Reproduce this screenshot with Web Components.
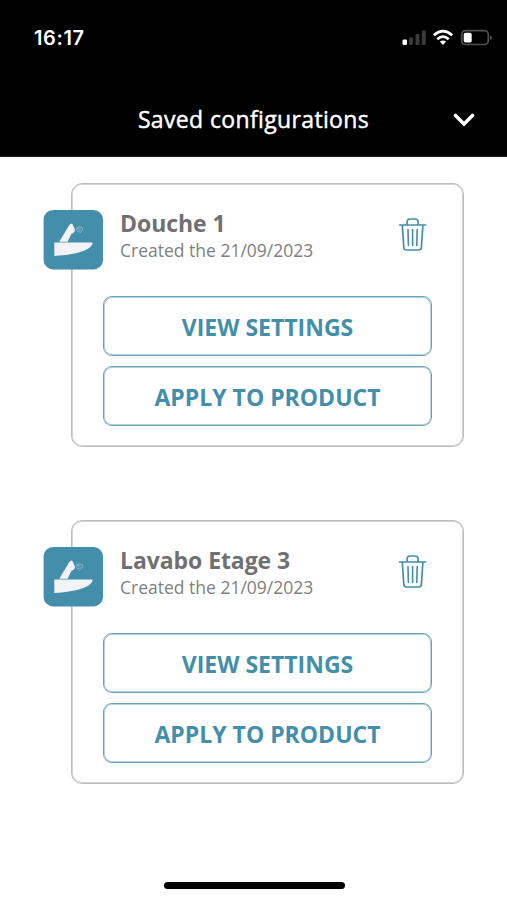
<!DOCTYPE html>
<html lang="en">
<head>
<meta charset="utf-8">
<title>Saved configurations</title>
<style>
html, body { margin: 0; background: #fff; }
body { width: 507px; height: 900px; overflow: hidden; font-family: "Open Sans", sans-serif; }
</style>
</head>
<body>
<app-screen>
  <status-bar slot="header" time="16:17"></status-bar>
  <title-bar slot="header">Saved configurations</title-bar>
  <config-card><span slot="name">Douche 1</span><span slot="date">Created the 21/09/2023</span></config-card>
  <config-card><span slot="name">Lavabo Etage 3</span><span slot="date">Created the 21/09/2023</span></config-card>
</app-screen>
<script>
const define = (name, html, init) => customElements.define(name, class extends HTMLElement {
  connectedCallback() {
    if (this.shadowRoot) return;
    this.attachShadow({ mode: 'open' }).innerHTML = html;
    if (init) init(this);
  }
});

define('app-screen', `
<style>
:host { display: flex; flex-direction: column; width: 507px; height: 900px; background: #fff; }
header { background: #000; height: 157px; box-sizing: border-box; border-bottom: 1px solid #1c1c1c; }
main { flex: 1; display: flex; flex-direction: column; gap: 73px; padding: 26px 43px 0 71px; }
footer { display: flex; justify-content: center; height: 18px; padding-left: 1px; }
i { width: 181px; height: 7px; border-radius: 4px; background: #000; }
</style>
<header><slot name="header"></slot></header>
<main><slot></slot></main>
<footer><i></i></footer>`);

define('status-bar', `
<style>
:host { display: flex; justify-content: space-between; align-items: center; height: 76px; padding: 0 14px 0 34px; box-sizing: border-box; color: #fff; }
time { font: 600 20px/24px Inter, sans-serif; letter-spacing: .6px; }
svg { display: block; }
</style>
<time></time>
<svg width="92" height="20" viewBox="401 28 92 20">
  <rect x="402.5" y="39.5" width="4.5" height="5.5" rx="1.2" fill="#fff"/>
  <g fill="#3a3a3a"><rect x="409" y="37.5" width="4" height="7.5" rx="1"/><rect x="415.5" y="34" width="4" height="11" rx="1"/><rect x="421.8" y="30.5" width="4" height="14.5" rx="1"/></g>
  <g fill="none" stroke="#fff" stroke-width="2.7"><path d="M433.8 35.2Q443 27.2 452.2 35.2"/><path d="M437.3 39.2Q443 34.2 448.7 39.2"/></g>
  <path d="M439.9 41.6Q443 39.2 446.1 41.6L443 45Z" fill="#fff"/>
  <rect x="461.7" y="30.7" width="26.6" height="13.8" rx="3.8" fill="none" stroke="#505050" stroke-width="1.7"/>
  <rect x="463.7" y="32.7" width="8" height="9.9" rx="1.8" fill="#fff"/>
  <path d="M490 35.5Q492 36.2 492 37.7T490 40Z" fill="#505050"/>
</svg>`, el => { el.shadowRoot.querySelector('time').textContent = el.getAttribute('time'); });

define('title-bar', `
<style>
:host { display: grid; grid-template-columns: 1fr auto 1fr; align-items: center; height: 80px; padding-top: 6px; box-sizing: border-box; color: #fff; }
h1 { grid-column: 2; margin: 0; font-size: 23px; line-height: 30px; font-weight: 500; letter-spacing: .36px; -webkit-text-stroke: .45px #fff; white-space: nowrap; }
svg { justify-self: end; margin: 1px 31px 0 0; }
</style>
<h1><slot></slot></h1>
<svg width="24" height="16" viewBox="0 0 24 16"><path d="M3.5 3.5L12 12L20.5 3.5" fill="none" stroke="#fff" stroke-width="3.6" stroke-linecap="round"/></svg>`);

define('product-icon', `
<style>:host, svg { display: block; width: 60px; height: 60px; }</style>
<svg viewBox="-.3 .3 60 60">
  <rect x=".3" y=".3" width="59.4" height="59.4" rx="9.5" fill="#438eab"/>
  <path d="M11 32.7H49.2C49.8 38.5 37 44.8 11 46.2Z" fill="#f2f3f6"/>
  <path d="M16 32L26 15.2Q28 12.6 29.3 14.5L30.2 16.7Q32 19 31.5 21.5L29.8 23.6L28.3 23.8L24.3 32Z" fill="#f2f3f6"/>
  <g fill="none" stroke="#8bb9cb" stroke-width=".9"><circle cx="35" cy="20.5" r="1.7"/><path d="M32.5 18.5Q36 15.8 39.4 18.2Q39.4 22 36.2 23.8"/></g>
</svg>`);

define('trash-icon', `
<style>:host, svg { display: block; width: 30px; height: 36px; }</style>
<svg viewBox=".4 0 30 36" fill="none" stroke="#438eab" stroke-width="1.7" stroke-linecap="round" stroke-linejoin="round">
  <path d="M2 8H28M9.5 8V5Q9.5 2 12.5 2H17.5Q20.5 2 20.5 5V8M4.7 8L6.2 30.5Q6.4 33 8.8 33H21.2Q23.6 33 23.8 30.5L25.3 8"/>
  <path d="M10.4 12.5L10.8 28.5M15 12.5V28.5M19.6 12.5L19.2 28.5" stroke-width="1.6"/>
</svg>`);

define('outline-button', `
<style>
:host { display: block; }
button { display: flex; align-items: center; justify-content: center; width: 100%; height: 60px; padding: 2px 0 0; box-sizing: border-box; border: 1px solid #68a2b8; box-shadow: inset 0 0 0 1px #b7d2dd; border-radius: 9px; background: #fff; color: #438eab; font: 700 23px/30px "Open Sans", sans-serif; white-space: nowrap; }
</style>
<button><slot></slot></button>`);

define('config-card', `
<style>
:host { display: block; box-sizing: border-box; width: 393px; height: 264px; border: 1px solid #bdbdbd; box-shadow: inset 0 0 0 1px #d4d4d4; border-radius: 11px; padding: 26px 31px 0; }
.head { display: flex; align-items: flex-start; height: 86px; margin-left: -60px; }
.text { flex: 1; margin: -2px 0 0 17px; white-space: nowrap; }
h2 { margin: 0; font-size: 23px; line-height: 30px; font-weight: 700; letter-spacing: -.07px; color: #707070; }
p { margin: 0; font-size: 17.5px; line-height: 25px; color: #808080; }
trash-icon { margin: 7px 4px 0 0; }
.actions { display: grid; gap: 10px; }
</style>
<div class="head"><product-icon></product-icon><div class="text"><h2><slot name="name"></slot></h2><p><slot name="date"></slot></p></div><trash-icon></trash-icon></div>
<div class="actions"><outline-button>VIEW SETTINGS</outline-button><outline-button>APPLY TO PRODUCT</outline-button></div>`);
</script>
</body>
</html>
